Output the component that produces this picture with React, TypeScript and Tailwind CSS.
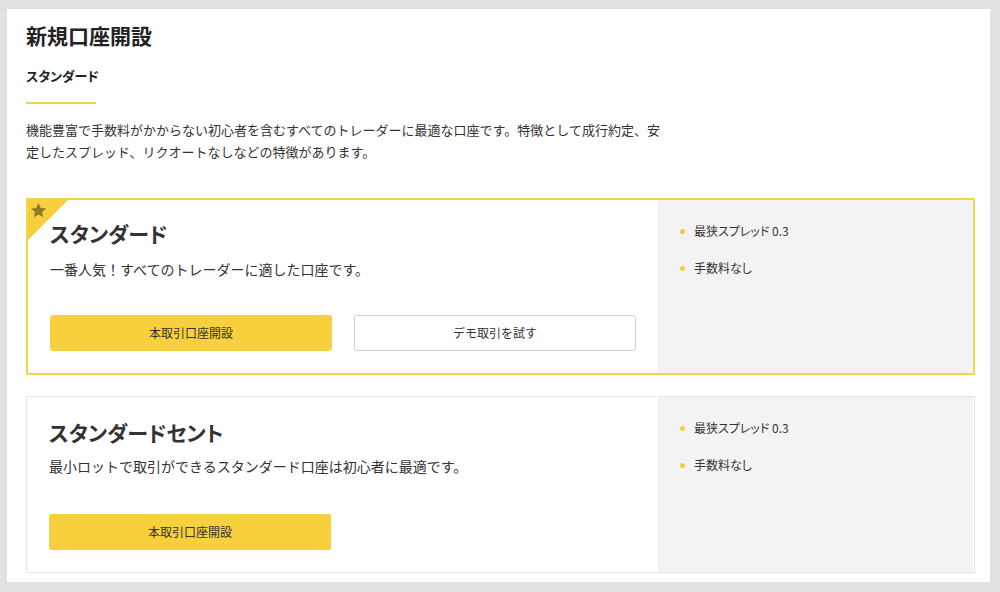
import React from "react";

function Feature({ items }: { items: string[] }) {
  return (
    <div className="w-[315px] bg-[#f3f3f3] pl-[22px] pt-[23px] flex flex-col gap-[21px]">
      {items.map((t) => (
        <div key={t} className="flex items-center gap-[9px] text-[12px] leading-[16px] text-[#333] [font-feature-settings:'palt']">
          <span className="w-[5px] h-[5px] rounded-full bg-[#f5cb3e]" />
          <span>{t}</span>
        </div>
      ))}
    </div>
  );
}

export default function App() {
  return (
    <div
      className="w-[1000px] h-[592px] bg-[#e1e1e1] pt-[9px] pl-[7px]"
      style={{ fontFamily: '"Noto Sans CJK JP", "Noto Sans", sans-serif' }}
    >
      <div className="w-[983px] h-[573px] bg-white pl-[19px] pt-[11px] relative">
        <h1 className="text-[21px] leading-[30px] font-bold text-[#222]">新規口座開設</h1>
        <h2 className="mt-[16px] text-[13px] leading-[20px] font-bold text-[#222] [font-feature-settings:'palt']">スタンダード</h2>
        <div className="mt-[16px] w-[70px] h-[2px] bg-[#f5d34a]" />
        <p className="mt-[15px] w-[640px] text-[13px] leading-[22px] text-[#333]">
          機能豊富で手数料がかからない初心者を含むすべてのトレーダーに最適な口座です。特徴として成行約定、安定したスプレッド、リクオートなしなどの特徴があります。
        </p>

        {/* Card 1 */}
        <div className="mt-[35px] w-[949px] h-[177px] border-2 border-[#f3d44e] flex relative">
          <div
            className="absolute left-0 top-0 w-[40px] h-[40px] bg-[#f7cf3c]"
            style={{ clipPath: "polygon(0 0, 100% 0, 0 100%)" }}
          />
          <svg width="19" height="19" viewBox="0 0 24 24" className="absolute left-[1px] top-[1px]">
            <path d="M12 2.5l2.9 6.2 6.6.7-5 4.5 1.4 6.6L12 17.2l-5.9 3.3 1.4-6.6-5-4.5 6.6-.7z" fill="#8c7b22" />
          </svg>
          <div className="w-[630px] pl-[22px] pt-[18px]">
            <div className="text-[21px] leading-[30px] font-bold text-[#333] [font-feature-settings:'palt']">スタンダード</div>
            <div className="mt-[11px] text-[14px] leading-[20px] text-[#333]">一番人気！すべてのトレーダーに適した口座です。</div>
            <div className="mt-[36px] flex gap-[22px]">
              <button className="w-[282px] h-[36px] rounded-[3px] bg-[#f8cf3c] text-[12px] text-[#333]">本取引口座開設</button>
              <button className="w-[282px] h-[36px] rounded-[3px] border border-[#cfcfcf] bg-white text-[12px] text-[#333]">デモ取引を試す</button>
            </div>
          </div>
          <div className="flex-1 flex">
            <Feature items={["最狭スプレッド 0.3", "手数料なし"]} />
          </div>
        </div>

        {/* Card 2 */}
        <div className="mt-[21px] w-[949px] h-[177px] border border-[#e6e6e6] flex">
          <div className="w-[631px] pl-[22px] pt-[20px]">
            <div className="text-[21px] leading-[30px] font-bold text-[#333] [font-feature-settings:'palt']">スタンダードセント</div>
            <div className="mt-[9px] text-[14px] leading-[20px] text-[#333]">最小ロットで取引ができるスタンダード口座は初心者に最適です。</div>
            <div className="mt-[38px] flex">
              <button className="w-[282px] h-[36px] rounded-[3px] bg-[#f8cf3c] text-[12px] text-[#333]">本取引口座開設</button>
            </div>
          </div>
          <div className="flex-1 flex">
            <Feature items={["最狭スプレッド 0.3", "手数料なし"]} />
          </div>
        </div>
      </div>
    </div>
  );
}
